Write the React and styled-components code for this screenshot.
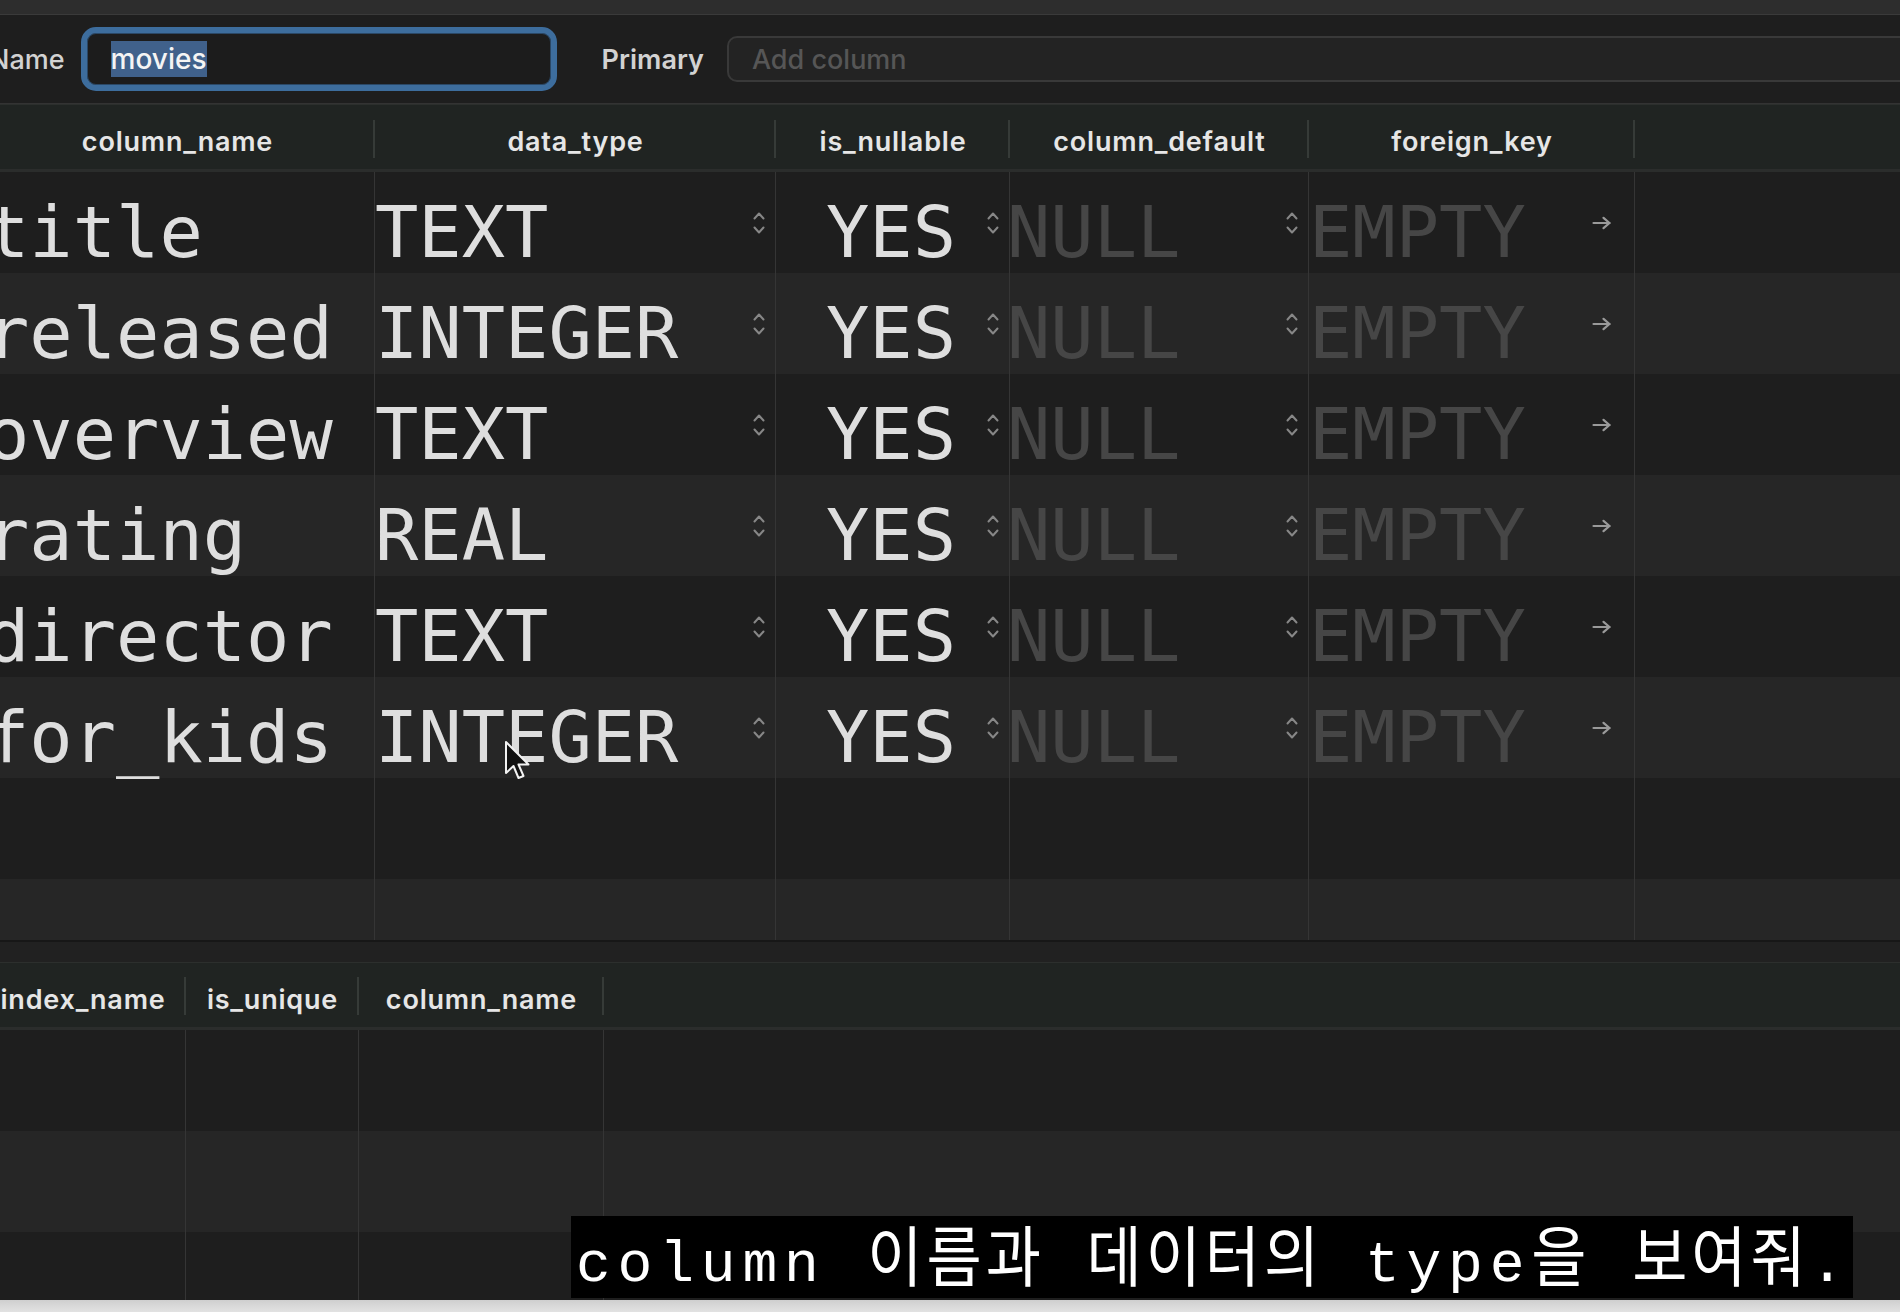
import React from 'react'
import styled, { createGlobalStyle } from 'styled-components'

const GlobalStyle = createGlobalStyle`
  html, body {
    margin: 0;
    padding: 0;
    background: #1e1e1e;
  }
  body {
    overflow: hidden;
  }
  * {
    box-sizing: border-box;
  }
`

const fields = [
  { name: 'title', type: 'TEXT' },
  { name: 'released', type: 'INTEGER' },
  { name: 'overview', type: 'TEXT' },
  { name: 'rating', type: 'REAL' },
  { name: 'director', type: 'TEXT' },
  { name: 'for_kids', type: 'INTEGER' },
]

const columnHeads = ['column_name', 'data_type', 'is_nullable', 'column_default', 'foreign_key', '']
const indexHeads = ['index_name', 'is_unique', 'column_name', '']

const Stepper = () => (
  <StepIcon width="14" height="28" viewBox="0 0 14 28">
    <path d="M2.5 9.5 L7 4.5 L11.5 9.5" />
    <path d="M2.5 18.5 L7 23.5 L11.5 18.5" />
  </StepIcon>
)

const FkArrow = () => (
  <ArrowIcon width="20" height="14" viewBox="0 0 20 14">
    <path d="M1.5 7 H17.5" />
    <path d="M11.5 1.8 L17.5 7 L11.5 12.2" />
  </ArrowIcon>
)

const Cursor = () => (
  <CursorMark width="28" height="42" viewBox="0 0 28 42">
    <path d="M2 2 L2 33 L9.5 26 L14.5 38 L19.5 36 L14.5 24.5 L24.5 24.5 Z" />
  </CursorMark>
)

const App = () => {
  const emptyRows = [0, 1]

  return (
    <Screen>
      <GlobalStyle />
      <TitleStrip />

      <Toolbar>
        <FieldLabel $offset={-11}>Name</FieldLabel>
        <NameInput>
          <Selected>movies</Selected>
        </NameInput>
        <FieldLabel $offset={45} $weight={600}>Primary</FieldLabel>
        <AddInput>Add column</AddInput>
      </Toolbar>

      <ColumnsHead>
        {columnHeads.map((h, i) => (
          <HeadCell key={i} $mark={i < 5}>{h}</HeadCell>
        ))}
      </ColumnsHead>

      <ColumnsBody>
        {fields.map((f, i) => (
          <ColumnsRow key={f.name} $alt={i % 2 === 1}>
            <Cell $pad={6}>
              <Value>{f.name}</Value>
            </Cell>
            <Cell>
              <Value>{f.type}</Value>
              <Stepper />
            </Cell>
            <Cell $pad={50}>
              <Value>YES</Value>
              <Stepper />
            </Cell>
            <Cell>
              <Value $dim $shift={-3}>NULL</Value>
              <Stepper />
            </Cell>
            <Cell>
              <Value $dim>EMPTY</Value>
              <FkArrow />
            </Cell>
            <Cell $last />
          </ColumnsRow>
        ))}
        {emptyRows.map((r) => (
          <ColumnsRow key={'e' + r} $alt={r === 1}>
            <Cell />
            <Cell />
            <Cell />
            <Cell />
            <Cell />
            <Cell $last />
          </ColumnsRow>
        ))}
      </ColumnsBody>

      <Splitter />

      <IndexHead>
        {indexHeads.map((h, i) => (
          <HeadCell key={i} $mark={i < 3} $markTop={14}>{h}</HeadCell>
        ))}
      </IndexHead>

      <IndexBody>
        {[0, 1, 2].map((r) => (
          <IndexRow key={r} $alt={r === 1}>
            <Cell />
            <Cell />
            <Cell />
            <Cell $last />
          </IndexRow>
        ))}
      </IndexBody>

      <BottomStrip />

      <Cursor />

      <Subtitle>
        column <Ko>이름과</Ko> <Ko>데이터의</Ko> type<Ko>을</Ko> <Ko>보여줘</Ko>.
      </Subtitle>
    </Screen>
  )
}

const Screen = styled.div`
  position: relative;
  width: 1900px;
  height: 1312px;
  overflow: hidden;
  display: flex;
  flex-direction: column;
  background: #1e1e1e;
  font-family: Inter, "Noto Sans", sans-serif;
`

const TitleStrip = styled.div`
  flex: none;
  height: 15px;
  background: #2d2d2d;
  border-bottom: 1px solid #3a3a3a;
`

const Toolbar = styled.div`
  flex: none;
  height: 89px;
  display: flex;
  align-items: center;
  background: #1e1e1e;
  border-bottom: 1px solid #333333;
`

const FieldLabel = styled.span`
  margin-left: ${({ $offset }) => $offset}px;
  font-size: 27px;
  font-weight: ${({ $weight }) => $weight || 500};
  color: #d2d2d2;
  white-space: nowrap;
`

const NameInput = styled.div`
  margin-left: 16px;
  width: 476px;
  height: 64px;
  display: flex;
  align-items: center;
  padding-left: 24px;
  border: 6px solid #3d6d9d;
  border-radius: 15px;
  background: #1c1c1c;
  box-shadow: inset 0 0 0 1px #2b4866;
`

const Selected = styled.span`
  background: #40618b;
  color: #f4f4f4;
  font-size: 28px;
  font-weight: 500;
  line-height: 36px;
`

const AddInput = styled.div`
  flex: 1;
  margin-left: 23px;
  margin-right: -30px;
  height: 46px;
  display: flex;
  align-items: center;
  padding-left: 23px;
  border: 2px solid #393939;
  border-radius: 10px;
  background: #232323;
  color: #565656;
  font-size: 27px;
  font-weight: 500;
`

const ColumnsGrid = styled.div`
  display: grid;
  grid-template-columns: 395px 401px 234px 299px 326px 1fr;
  margin-left: -20px;
  width: 1920px;
`

const ColumnsHead = styled(ColumnsGrid)`
  flex: none;
  height: 68px;
  background: #202422;
  border-top: 1px solid #2c2f2d;
  border-bottom: 3px solid #2b2d2c;
`

const HeadCell = styled.div`
  position: relative;
  display: flex;
  align-items: center;
  justify-content: center;
  padding-top: 9px;
  font-size: 27px;
  font-weight: 600;
  letter-spacing: 0.8px;
  color: #e6e6e6;
  white-space: nowrap;

  &::after {
    content: '';
    display: ${({ $mark }) => ($mark ? 'block' : 'none')};
    position: absolute;
    right: 0;
    top: ${({ $markTop }) => $markTop || 15}px;
    width: 2px;
    height: 38px;
    background: #363b38;
  }
`

const ColumnsBody = styled.div`
  flex: none;
  height: 768px;
  overflow: hidden;
`

const ColumnsRow = styled(ColumnsGrid)`
  height: 101px;
  background: ${({ $alt }) => ($alt ? '#262626' : '#1e1e1e')};
`

const Cell = styled.div`
  display: flex;
  align-items: center;
  justify-content: space-between;
  min-width: 0;
  padding-left: ${({ $pad }) => $pad || 0}px;
  border-right: ${({ $last }) => ($last ? 'none' : '1px solid #353535')};
`

const Value = styled.span`
  padding-top: 18px;
  margin-left: ${({ $shift }) => $shift || 0}px;
  font-family: "DejaVu Sans Mono", "Liberation Mono", monospace;
  font-size: 72px;
  line-height: 72px;
  color: ${({ $dim }) => ($dim ? '#464646' : '#dedede')};
  white-space: nowrap;
`

const StepIcon = styled.svg`
  flex: none;
  margin-right: 9px;
  fill: none;
  stroke: #878787;
  stroke-width: 2;
  stroke-linecap: round;
  stroke-linejoin: round;
`

const ArrowIcon = styled.svg`
  flex: none;
  margin-right: 22px;
  fill: none;
  stroke: #9a9a9a;
  stroke-width: 2.2;
  stroke-linecap: round;
  stroke-linejoin: round;
`

const Splitter = styled.div`
  flex: none;
  height: 22px;
  background: #212121;
  border-top: 2px solid #171717;
`

const IndexGrid = styled.div`
  display: grid;
  grid-template-columns: 206px 173px 245px 1fr;
  margin-left: -20px;
  width: 1920px;
`

const IndexHead = styled(IndexGrid)`
  flex: none;
  height: 68px;
  background: #202422;
  border-top: 1px solid #2c2f2d;
  border-bottom: 3px solid #2b2d2c;
`

const IndexBody = styled.div`
  flex: none;
  height: 270px;
  overflow: hidden;
`

const IndexRow = styled(IndexGrid)`
  height: 101px;
  background: ${({ $alt }) => ($alt ? '#262626' : '#1e1e1e')};
`

const BottomStrip = styled.div`
  flex: none;
  height: 12px;
  background: linear-gradient(#cfcfcf, #e2e2e2);
`

const CursorMark = styled.svg`
  position: absolute;
  left: 504px;
  top: 740px;
  fill: #111111;
  stroke: #f2f2f2;
  stroke-width: 2;
  stroke-linejoin: round;
`

const Subtitle = styled.div`
  position: absolute;
  left: 571px;
  bottom: 14px;
  width: 1282px;
  height: 82px;
  padding: 2px 0 0 5px;
  background: #000000;
  color: #ffffff;
  font-family: "Liberation Mono", "DejaVu Sans Mono", monospace;
  font-size: 58px;
  letter-spacing: 6.8px;
  line-height: 74px;
  white-space: nowrap;
`

const Ko = styled.span`
  display: inline-block;
  font-family: "Noto Sans CJK KR", "Noto Sans", sans-serif;
  font-size: 60px;
  letter-spacing: 4px;
  transform: scaleY(1.1);
  transform-origin: 50% 85%;
`

export default App
